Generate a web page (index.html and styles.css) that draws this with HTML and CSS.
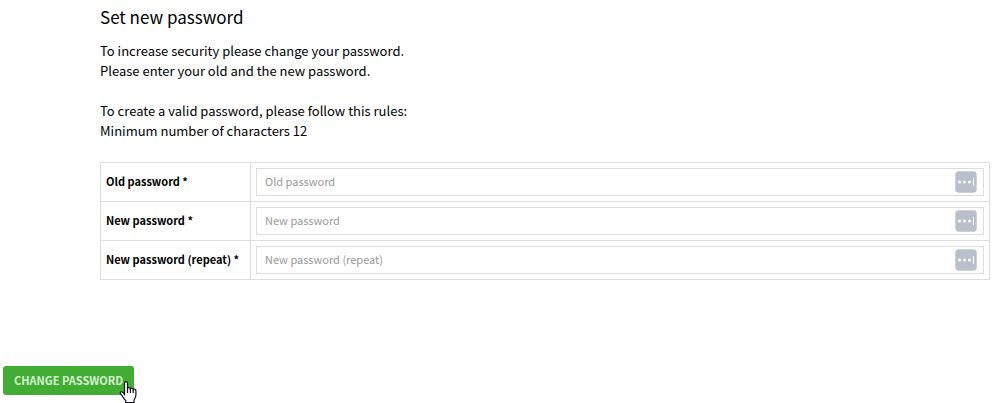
FILE: index.html
```
<!DOCTYPE html>
<html lang="en">
<head>
  <meta charset="UTF-8">
  <title>Set new password</title>
  <meta name="viewport" content="width=device-width, initial-scale=1.0">
  <link rel="stylesheet" href="styles.css">
</head>
<body>
<form class="password-form">
  <div class="content">
    <h1>Set new password</h1>
    <p>To increase security please change your password.<br>Please enter your old and the new password.</p>
    <p>To create a valid password, please follow this rules:<br>Minimum number of characters 12</p>

    <table class="fields">
      <tr>
        <th><label for="oldPassword">Old password *</label></th>
        <td>
          <div class="field">
            <input type="password" id="oldPassword" placeholder="Old password">
            <svg class="key-icon" viewBox="0 0 22 22"><use href="#dots"/></svg>
          </div>
        </td>
      </tr>
      <tr>
        <th><label for="newPassword">New password *</label></th>
        <td>
          <div class="field">
            <input type="password" id="newPassword" placeholder="New password">
            <svg class="key-icon" viewBox="0 0 22 22"><use href="#dots"/></svg>
          </div>
        </td>
      </tr>
      <tr>
        <th><label for="repeatPassword">New password (repeat) *</label></th>
        <td>
          <div class="field">
            <input type="password" id="repeatPassword" placeholder="New password (repeat)">
            <svg class="key-icon" viewBox="0 0 22 22"><use href="#dots"/></svg>
          </div>
        </td>
      </tr>
    </table>
  </div>

  <div class="actions">
    <button type="submit" class="btn">CHANGE PASSWORD</button>
    <svg class="pointer" viewBox="0 0 20 23">
      <path d="M6.5 14.5V3.2c0-2.2 3-2.2 3 0v5.3c.3-1.3 2.7-1.2 2.9 .4c.5-1.1 2.6-.9 2.8 .7c.6-1 2.7-.7 2.7 1.1v4.6c0 2.2-1.7 3.6-1.9 5.2v2H7.8v-1.8c-1.5-1.6-3.2-4.3-4.8-6.3c-1.8-2.3 .4-3.4 1.9-1.9z" fill="#fff" stroke="#111122" stroke-width="1.2"/>
      <path d="M9.5 8v5M12.4 9v4M15.2 10v3" fill="none" stroke="#111122" stroke-width="1.2"/>
    </svg>
  </div>
</form>

<svg class="symbols">
  <symbol id="dots" viewBox="0 0 22 22">
    <rect width="22" height="22" rx="4" fill="#dde1e7"/>
    <rect x="0.5" y="0.5" width="21" height="21" rx="3.5" fill="#b9c0cb"/>
    <circle cx="4.5" cy="11" r="1.5" fill="#fff"/>
    <circle cx="9.5" cy="11" r="1.5" fill="#fff"/>
    <circle cx="14.5" cy="11" r="1.5" fill="#fff"/>
    <rect x="18" y="7" width="1" height="8" fill="#fff"/>
  </symbol>
</svg>
</body>
</html>
```

FILE: styles.css
```
* {
  box-sizing: border-box;
}
body {
  margin: 0;
  background: #fff;
  color: #000;
  font-family: "Noto Sans CJK SC", "Noto Sans", sans-serif;
  font-size: 13px;
  line-height: 20px;
}
.content {
  padding: 5px 12px 0 100px;
}
h1 {
  margin: 0 0 12px;
  font-size: 17px;
  font-weight: 400;
  line-height: 24px;
}
p {
  margin: 0 0 20px;
}
.fields {
  width: 100%;
  margin-top: 21px;
  border-collapse: collapse;
  table-layout: fixed;
}
.fields th, .fields td {
  padding: 5px;
  border: 1px solid #ddd;
}
.fields th {
  width: 150px;
  padding-bottom: 8px;
  font-size: 11px;
  font-weight: 700;
  text-align: left;
}
.field {
  position: relative;
}
.field input {
  display: block;
  width: 100%;
  height: 28px;
  padding: 0 36px 2px 8px;
  border: 1px solid #ddd;
  background: #fff;
  font-family: inherit;
  font-size: 11px;
}
.field input::placeholder {
  color: #999;
}
.key-icon {
  position: absolute;
  top: 3px;
  right: 7px;
  width: 22px;
  height: 22px;
}
.actions {
  position: relative;
  display: flex;
  margin: 86px 3px 0;
  padding-bottom: 8px;
}
.btn {
  height: 29px;
  padding: 0 11px 2px;
  border: none;
  border-radius: 3px;
  background: #43ac34;
  color: #d5f2cf;
  font-family: inherit;
  font-size: 11px;
  font-weight: 700;
  cursor: pointer;
}
.pointer {
  position: absolute;
  top: 14px;
  left: 115px;
  width: 20px;
  height: 23px;
}
.symbols {
  position: absolute;
  width: 0;
  height: 0;
}
```
